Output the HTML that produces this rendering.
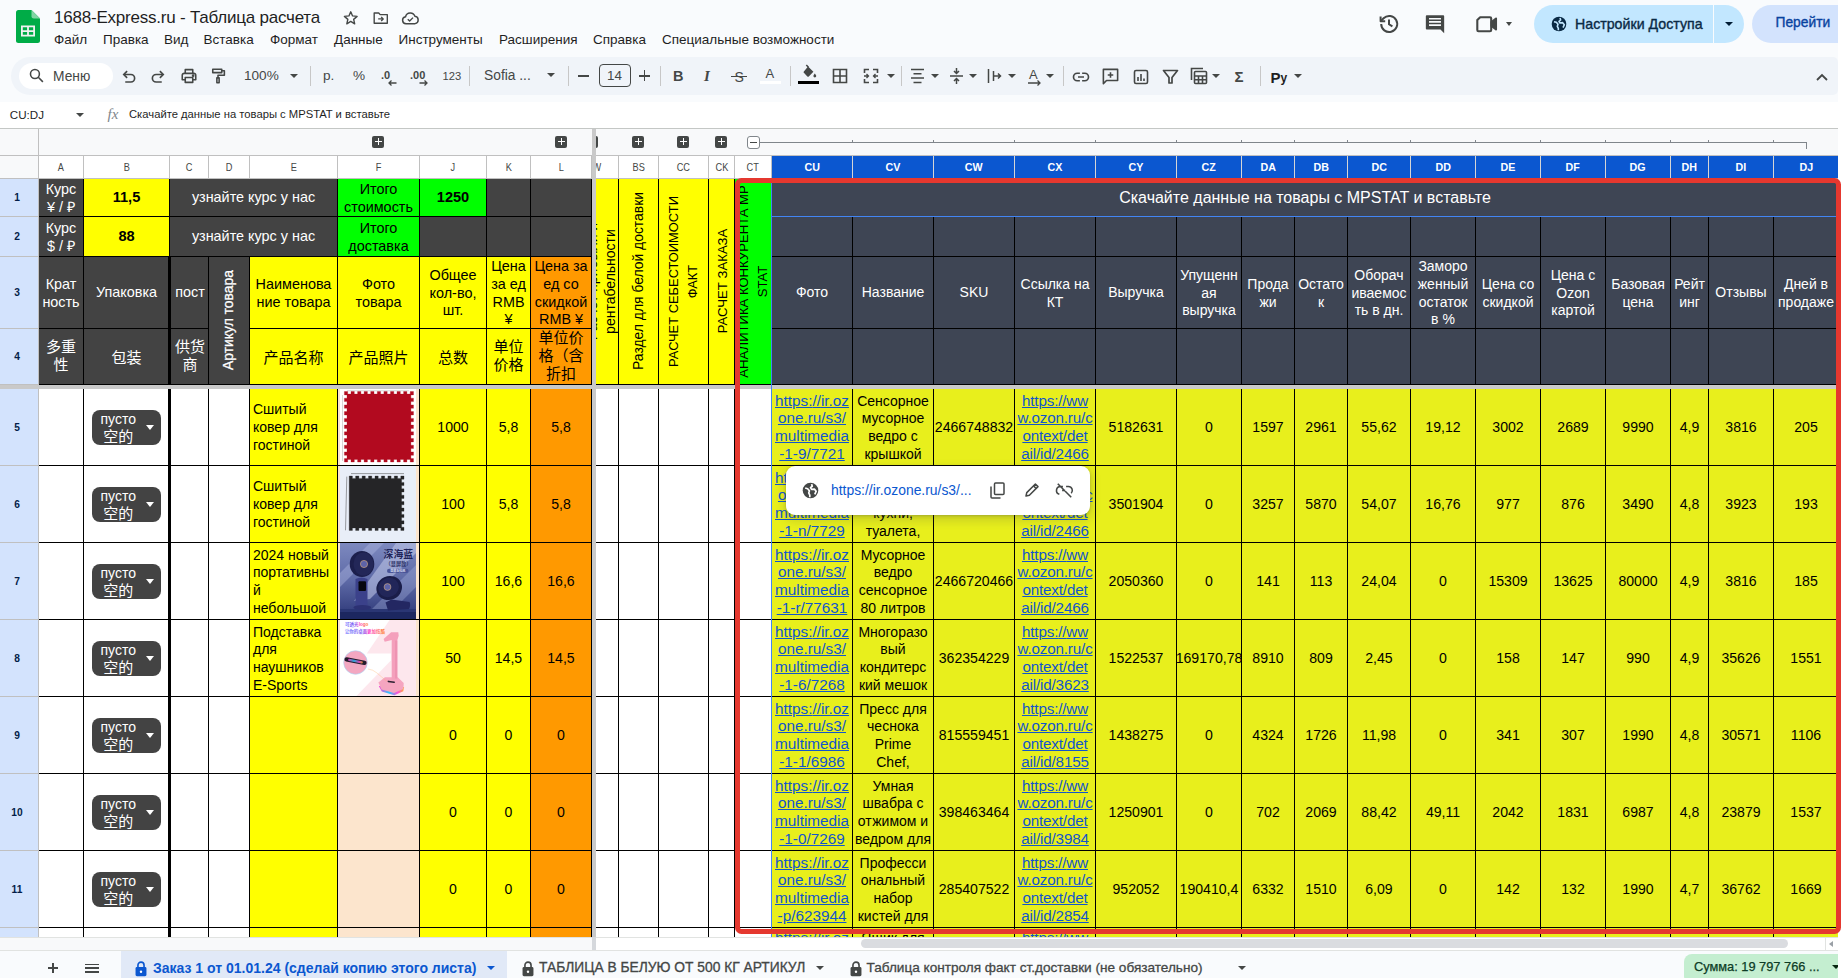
<!DOCTYPE html>
<html lang="ru"><head><meta charset="utf-8"><title>1688-Express.ru - Таблица расчета</title>
<style>
html,body{margin:0;padding:0;background:#fff}
body{width:1842px;height:978px;overflow:hidden;position:relative;font-family:"Liberation Sans","Noto Sans CJK SC",sans-serif;color:#1f1f1f}
#app{position:absolute;left:0;top:0;width:1838px;height:978px;overflow:hidden;background:#f9fbfd}
.a{position:absolute}
.t{position:absolute;white-space:nowrap}
.c{position:absolute;box-sizing:border-box;border-right:1px solid #000;border-bottom:1px solid #000;display:flex;align-items:center;justify-content:center;text-align:center;font-size:14px;line-height:17.7px;color:#000;overflow:hidden;white-space:nowrap;padding-top:2px}
.w{color:#fff}
.b{font-weight:bold}
.l{justify-content:flex-start;text-align:left}
.lnk{color:#1155cc;text-decoration:underline;font-size:15.3px;position:relative;top:-1px}
.lnk2{color:#1155cc;text-decoration:underline;font-size:15.2px;letter-spacing:-.15px;position:relative;top:-1px}
.cj{font-size:15px;position:relative;top:-1.5px}
.ch{position:absolute;box-sizing:border-box;top:156px;height:22px;border-right:1px solid #c0c0c0;background:#fff;color:#444746;font-size:11.5px;line-height:22px;text-align:center}
.ch b{display:inline-block;font-weight:inherit;transform:scaleX(.8);position:relative;top:-.5px}
.chs b{transform:scaleX(.93)}
.chs{background:#0b57d0;color:#fff;font-weight:bold;border-right:1px solid #d5d5d5}
.rh{position:absolute;box-sizing:border-box;left:0;width:38px;padding-right:4px;background:#d3e3fd;color:#041e49;font-size:10.2px;font-weight:bold;text-align:center;border-bottom:1px solid #c0c0c0;display:flex;align-items:center;justify-content:center}
.rot{position:absolute;white-space:nowrap;transform:translateY(-1.5px) rotate(-90deg);transform-origin:center center;text-align:center;font-size:14px;line-height:19px}
.chip{position:absolute;left:8.2px;top:20.5px;width:68.4px;height:35.5px;border-radius:8px;background:#434343;color:#fff;font-size:14px;line-height:17px;text-align:center}
.cj1{top:.6px}
.chip .cj{top:0}
.chip i{position:absolute;right:7px;top:15px;width:0;height:0;border-left:4.5px solid transparent;border-right:4.5px solid transparent;border-top:5px solid #fff}
.chip>span{position:absolute;left:0;top:1px;width:52px;text-align:center;white-space:nowrap}
svg{position:absolute;overflow:visible}
.sep{position:absolute;top:66px;width:1px;height:20px;background:#c7c7c7}
.dd{position:absolute;width:0;height:0;border-left:4px solid transparent;border-right:4px solid transparent;border-top:4px solid #444746}
</style></head><body><div id="app">
<svg style="left:16px;top:10px" width="24" height="33" viewBox="0 0 24 33">
<path d="M2.3 0h13.2L24 8.5v22.2c0 1.3-1 2.3-2.3 2.3H2.3C1 33 0 32 0 30.700V2.300C0 1 1 0 2.300 0z" fill="#00ac47"/>
<path d="M15.500 0L24 8.500h-6.200c-1.300 0-2.300-1-2.300-2.300z" fill="#7fd5a3"/>
<path d="M5 15.500h14v11H5zM6.800 17.300v2.900h4.300v-2.900zm6.100 0v2.900h4.300v-2.900zm-6.100 4.600v2.800h4.300v-2.800zm6.100 0v2.800h4.300v-2.800z" fill="#f1f1f1" fill-rule="evenodd"/>
</svg>
<div class="t" style="left:54px;top:6.5px;font-size:17px;line-height:22.1px;color:#1f1f1f;font-weight:normal;letter-spacing:-0.22px;">1688-Express.ru - Таблица расчета</div>
<svg style="left:342.3px;top:9.2px" width="17.5" height="17.5" viewBox="0 0 24 24" fill="none" stroke="#444746" stroke-width="1.9" stroke-linejoin="round"><path d="M12 3.800l2.500 5.700 6.200.600-4.700 4.100 1.400 6.100L12 17.100l-5.400 3.200 1.400-6.100-4.700-4.100 6.200-.6z"/></svg>
<svg style="left:372.2px;top:9.2px" width="17.5" height="17.5" viewBox="0 0 24 24" fill="none" stroke="#444746" stroke-width="1.9" stroke-linejoin="round"><path d="M3 5.500h6.200l2 2.200H21v11.800H3z"/><path d="M8.500 13.600h6.500M12.600 10.800l2.800 2.800-2.800 2.800" stroke-width="1.800"/></svg>
<svg style="left:401.3px;top:9px" width="18.5" height="18.5" viewBox="0 0 24 24" fill="none" stroke="#444746" stroke-width="1.900" stroke-linejoin="round"><path d="M6.500 19a4.500 4.500 0 0 1-.6-8.950A6.300 6.300 0 0 1 18 9.500 4.800 4.800 0 0 1 18.300 19z"/><path d="M8.800 13.300l2.400 2.400 4.400-4.500" stroke-width="1.800"/></svg>
<div class="t" style="left:54px;top:30.8px;font-size:13.5px;line-height:17.6px;color:#1f1f1f;font-weight:normal;">Файл</div>
<div class="t" style="left:103px;top:30.8px;font-size:13.5px;line-height:17.6px;color:#1f1f1f;font-weight:normal;">Правка</div>
<div class="t" style="left:164px;top:30.8px;font-size:13.5px;line-height:17.6px;color:#1f1f1f;font-weight:normal;">Вид</div>
<div class="t" style="left:203.5px;top:30.8px;font-size:13.5px;line-height:17.6px;color:#1f1f1f;font-weight:normal;">Вставка</div>
<div class="t" style="left:270px;top:30.8px;font-size:13.5px;line-height:17.6px;color:#1f1f1f;font-weight:normal;">Формат</div>
<div class="t" style="left:334px;top:30.8px;font-size:13.5px;line-height:17.6px;color:#1f1f1f;font-weight:normal;">Данные</div>
<div class="t" style="left:398.5px;top:30.8px;font-size:13.5px;line-height:17.6px;color:#1f1f1f;font-weight:normal;">Инструменты</div>
<div class="t" style="left:499px;top:30.8px;font-size:13.5px;line-height:17.6px;color:#1f1f1f;font-weight:normal;">Расширения</div>
<div class="t" style="left:593px;top:30.8px;font-size:13.5px;line-height:17.6px;color:#1f1f1f;font-weight:normal;">Справка</div>
<div class="t" style="left:662px;top:30.8px;font-size:13.5px;line-height:17.6px;color:#1f1f1f;font-weight:normal;">Специальные возможности</div>
<svg style="left:1377px;top:12px" width="24" height="24" viewBox="0 0 24 24" fill="none" stroke="#444746" stroke-width="2"><path d="M4.200 12a8 8 0 1 0 2.400-5.700L4 8.900" stroke-linejoin="round"/><path d="M3.600 4.600v4.600h4.600" stroke-linejoin="round"/><path d="M12 7.500V12.300l3.400 2.100"/></svg>
<svg style="left:1424px;top:13px" width="22" height="22" viewBox="0 0 24 24"><path d="M3 2.500h18a1 1 0 0 1 1 1V22l-4-4H3a1 1 0 0 1-1-1V3.500a1 1 0 0 1 1-1z" fill="#444746"/><path d="M5.500 6.200h13M5.500 9.700h13M5.500 13.200h13" stroke="#f9fbfd" stroke-width="1.700"/></svg>
<svg style="left:1475px;top:13px" width="24" height="22" viewBox="0 0 24 22" fill="none" stroke="#444746" stroke-width="2.100" stroke-linejoin="round"><path d="M5.200 4.200H15a1.200 1.200 0 0 1 1.200 1.200V17A1.200 1.200 0 0 1 15 18.200H3.500A1.200 1.200 0 0 1 2.300 17V7.100z"/><path d="M16.500 9l4.500-3.500v11L16.500 13z" fill="#444746"/></svg>
<div class="dd" style="left:1506px;top:22px;border-left-width:3.5px;border-right-width:3.500px;border-top-width:4px"></div>
<div class="a" style="left:1534px;top:5px;width:210px;height:37.500px;border-radius:19px;background:#c2e7ff"></div>
<div class="a" style="left:1713px;top:5px;width:1px;height:37.500px;background:#f9fbfd"></div>
<svg style="left:1551px;top:16px" width="16" height="16" viewBox="0 0 24 24"><circle cx="12" cy="12" r="11" fill="#0a2a45"/><path d="M4.500 8.500l3.500 1 2.500 3-1 3 1.500 3v3M13.500 3l1 3-2.500 2 1.500 2.500 4-.5 2.500 3-2 4.500" fill="none" stroke="#c2e7ff" stroke-width="2.400" stroke-linejoin="round"/></svg>
<div class="t" style="left:1575px;top:14.6px;font-size:14.2px;line-height:18.5px;color:#0a2a45;font-weight:normal;-webkit-text-stroke:.35px #0a2a45">Настройки Доступа</div>
<div class="dd" style="left:1724.500px;top:22px;border-top-color:#001d35"></div>
<div class="a" style="left:1752px;top:5px;width:100px;height:37.500px;border-radius:19px 4px 4px 19px;background:#d3e3fd"></div>
<div class="t" style="left:1775.5px;top:14.1px;font-size:13.8px;line-height:17.9px;color:#0842a0;font-weight:normal;-webkit-text-stroke:.35px #0842a0">Перейти</div>
<div class="a" style="left:11px;top:57.200px;width:1827px;height:37.700px;border-radius:19px 5px 5px 19px;background:#f0f4f9"></div>
<div class="a" style="left:19px;top:63px;width:94px;height:26px;border-radius:13px;background:#fff"></div>
<svg style="left:28px;top:67px" width="17" height="17" viewBox="0 0 24 24" fill="none" stroke="#444746" stroke-width="2.200"><circle cx="9.800" cy="9.800" r="6.300"/><path d="M14.500 14.500l6.500 6.500"/></svg>
<div class="t" style="left:53px;top:67.6px;font-size:13.8px;line-height:17.9px;color:#444746;font-weight:normal;">Меню</div>
<svg style="left:120px;top:67px" width="18" height="18" viewBox="0 0 24 24" fill="none" stroke="#444746" stroke-width="2.200"><path d="M7 20h7.500a5 5 0 0 0 0-10H5.500"/><path d="M9.500 5.500L5 10l4.500 4.500"/></svg>
<svg style="left:149px;top:67px" width="18" height="18" viewBox="0 0 24 24" fill="none" stroke="#444746" stroke-width="2.200"><path d="M17 20H9.500a5 5 0 0 1 0-10h9"/><path d="M14.500 5.500L19 10l-4.500 4.500"/></svg>
<svg style="left:180px;top:67px" width="18" height="18" viewBox="0 0 24 24" fill="none" stroke="#444746" stroke-width="2.100" stroke-linejoin="round"><path d="M7 8V3.500h10V8"/><path d="M7 17H3V11a2.500 2.500 0 0 1 2.500-2.500h13A2.500 2.500 0 0 1 21 11v6h-4"/><path d="M7 14h10v6.500H7z"/><circle cx="17.500" cy="11.500" r=".8" fill="#444746"/></svg>
<svg style="left:209px;top:67px" width="18" height="18" viewBox="0 0 24 24" fill="none" stroke="#444746" stroke-width="2.100" stroke-linejoin="round"><path d="M5 3h12v4.500H5z"/><path d="M17 5h3.500v6H12v3.500"/><path d="M10.500 14.500h3V21h-3z"/></svg>
<div class="t" style="left:244px;top:67.4px;font-size:13.6px;line-height:17.7px;color:#444746;font-weight:normal;">100%</div>
<div class="dd" style="left:290px;top:74px"></div>
<div class="sep" style="left:310px"></div>
<div class="t" style="left:323px;top:67.4px;font-size:13.6px;line-height:17.7px;color:#444746;font-weight:normal;">р.</div>
<div class="t" style="left:353px;top:67.4px;font-size:13.6px;line-height:17.7px;color:#444746;font-weight:normal;">%</div>
<div class="t" style="left:381px;top:68.0px;font-size:11px;line-height:14.3px;color:#444746;font-weight:bold;">.0</div>
<svg style="left:388px;top:80px" width="9" height="6" viewBox="0 0 9 6" fill="none" stroke="#444746" stroke-width="1.300"><path d="M8.500 3H1M3.500 .5L1 3l2.500 2.500"/></svg>
<div class="t" style="left:410px;top:68.0px;font-size:11px;line-height:14.3px;color:#444746;font-weight:bold;">.00</div>
<svg style="left:419px;top:80px" width="9" height="6" viewBox="0 0 9 6" fill="none" stroke="#444746" stroke-width="1.300"><path d="M.5 3H8M5.500 .5L8 3 5.500 5.500"/></svg>
<div class="t" style="left:442.5px;top:69.3px;font-size:11.2px;line-height:14.6px;color:#444746;font-weight:normal;">123</div>
<div class="sep" style="left:469px"></div>
<div class="t" style="left:484px;top:67.0px;font-size:13.8px;line-height:17.9px;color:#444746;font-weight:normal;">Sofia ...</div>
<div class="dd" style="left:547px;top:73px"></div>
<div class="sep" style="left:568px"></div>
<div class="a" style="left:578px;top:75px;width:11px;height:1.600px;background:#444746"></div>
<div class="a" style="left:599px;top:64px;width:32px;height:23px;box-sizing:border-box;border:1px solid #444746;border-radius:4px"></div>
<div class="t" style="left:607px;top:67.2px;font-size:13.4px;line-height:17.4px;color:#444746;font-weight:normal;">14</div>
<div class="a" style="left:639px;top:75px;width:11px;height:1.600px;background:#444746"></div><div class="a" style="left:643.700px;top:70.300px;width:1.600px;height:11px;background:#444746"></div>
<div class="sep" style="left:660px"></div>
<div class="t" style="left:673px;top:67.0px;font-size:14.5px;line-height:18.9px;color:#444746;font-weight:bold;">B</div>
<div class="t" style="left:704px;top:66.6px;font-size:15px;line-height:19.5px;color:#444746;font-weight:bold;font-style:italic;font-family:'Liberation Serif',serif">I</div>
<div class="t" style="left:734.5px;top:67.5px;font-size:14px;line-height:18.2px;color:#444746;font-weight:normal;">S</div>
<div class="a" style="left:731px;top:75.500px;width:16px;height:1.500px;background:#444746"></div>
<div class="t" style="left:765.5px;top:66.0px;font-size:13px;line-height:16.9px;color:#444746;font-weight:normal;">A</div>
<div class="a" style="left:759.500px;top:81px;width:21.500px;height:3px;background:#fff"></div>
<div class="sep" style="left:790px"></div>
<svg style="left:801px;top:64px" width="17" height="17" viewBox="0 0 24 24"><path d="M10 3.500l7.500 7.500-6.500 6.500a1.500 1.500 0 0 1-2 0L4 12.500a1.500 1.500 0 0 1 0-2z" fill="#444746"/><path d="M7.500 1.500L10.500 4.500" stroke="#444746" stroke-width="2.200"/><path d="M19.500 13.500s2 2.300 2 3.600a2 2 0 0 1-4 0c0-1.300 2-3.600 2-3.600z" fill="#444746"/></svg>
<div class="a" style="left:798px;top:81px;width:21px;height:3px;background:#000"></div>
<svg style="left:832px;top:68px" width="16" height="16" viewBox="0 0 16 16" fill="none" stroke="#444746" stroke-width="1.600"><path d="M1.500 1.500h13v13h-13zM8 1.500v13M1.500 8h13"/></svg>
<svg style="left:863px;top:68px" width="16" height="16" viewBox="0 0 16 16" fill="none" stroke="#444746" stroke-width="1.600"><path d="M1.500 5V1.500H6M10 1.500h4.500V5M1.500 11v3.500H6M10 14.500h4.500V11"/><path d="M1 8h4.500M3.500 6L5.500 8l-2 2M15 8h-4.500M12.500 6l-2 2 2 2" stroke-width="1.300"/></svg>
<div class="dd" style="left:887px;top:74px"></div>
<div class="sep" style="left:901px"></div>
<svg style="left:910px;top:68px" width="15" height="16" viewBox="0 0 15 16" stroke="#444746" stroke-width="1.500"><path d="M1 1.500h13M3.500 5.800h8M1 10.100h13M3.500 14.400h8"/></svg>
<div class="dd" style="left:931px;top:74px"></div>
<svg style="left:949px;top:67px" width="15" height="18" viewBox="0 0 15 18" fill="none" stroke="#444746" stroke-width="1.500"><path d="M1 9h13M7.500 1v5M5 4l2.500 2.500L10 4M7.500 17v-5M5 14l2.500-2.500L10 14"/></svg>
<div class="dd" style="left:969px;top:74px"></div>
<svg style="left:987px;top:68px" width="15" height="16" viewBox="0 0 15 16" fill="none" stroke="#444746" stroke-width="1.500"><path d="M1.500 1v14M6.500 3v10M6.500 8h7M11 5.500L13.500 8 11 10.500"/></svg>
<div class="dd" style="left:1008px;top:74px"></div>
<div class="t" style="left:1029px;top:67.0px;font-size:13px;line-height:16.9px;color:#444746;font-weight:normal;">A</div>
<svg style="left:1028px;top:80px" width="13" height="6" viewBox="0 0 13 6" fill="none" stroke="#444746" stroke-width="1.300"><path d="M0 3h12M9.500 .5L12 3 9.500 5.500"/></svg>
<div class="dd" style="left:1046px;top:74px"></div>
<div class="sep" style="left:1063px"></div>
<svg style="left:1072px;top:68px" width="18" height="18" viewBox="0 0 24 24" fill="none" stroke="#444746" stroke-width="2.200"><path d="M10.500 7H7a5 5 0 0 0 0 10h3.500M13.500 7H17a5 5 0 0 1 0 10h-3.500M8 12h8"/></svg>
<svg style="left:1101px;top:67px" width="19" height="19" viewBox="0 0 24 24" fill="none" stroke="#444746" stroke-width="2" stroke-linejoin="round"><path d="M3 3h18v14H7l-4 4z"/><path d="M12 6.500v7M8.500 10h7"/></svg>
<svg style="left:1133px;top:69px" width="16" height="16" viewBox="0 0 16 16" fill="none" stroke="#444746" stroke-width="1.600"><rect x="1.500" y="1.500" width="13" height="13" rx="1.500"/><path d="M5 12V8M8 12V5M11 12v-2.500"/></svg>
<svg style="left:1162px;top:69px" width="17" height="16" viewBox="0 0 17 16" fill="none" stroke="#444746" stroke-width="1.700" stroke-linejoin="round"><path d="M1.500 1.500h14L10 8.500v5.500H7V8.500z"/></svg>
<svg style="left:1190px;top:67px" width="18" height="18" viewBox="0 0 18 18" fill="none" stroke="#444746" stroke-width="1.600"><path d="M1.500 13V1.500H13"/><rect x="4.500" y="4.500" width="12" height="12" rx="1"/><path d="M4.500 9h12M4.500 12.800h12M8.500 9v7.500M12.500 9v7.500"/></svg>
<div class="dd" style="left:1212px;top:74px"></div>
<div class="t" style="left:1234.5px;top:67.1px;font-size:15px;line-height:19.5px;color:#444746;font-weight:bold;">Σ</div>
<div class="sep" style="left:1260px"></div>
<div class="t" style="left:1270.5px;top:67.6px;font-size:15px;line-height:19.5px;color:#1f1f1f;font-weight:bold;">P</div>
<div class="t" style="left:1280.5px;top:71.0px;font-size:12px;line-height:15.6px;color:#1f1f1f;font-weight:bold;">y</div>
<div class="dd" style="left:1294px;top:74px"></div>
<svg style="left:1816px;top:73px" width="12" height="8" viewBox="0 0 12 8" fill="none" stroke="#444746" stroke-width="1.800"><path d="M1 7l5-5 5 5"/></svg>
<div class="a" style="left:0;top:102px;width:1838px;height:26px;background:#fff"></div>
<div class="t" style="left:9.8px;top:107.3px;font-size:11.6px;line-height:15.1px;color:#1f1f1f;font-weight:normal;">CU:DJ</div>
<div class="dd" style="left:76px;top:113px"></div>
<div class="t" style="left:107.5px;top:104.6px;font-size:15px;line-height:19.5px;color:#80868b;font-weight:normal;font-style:italic;font-family:'Liberation Serif',serif">fx</div>
<div class="t" style="left:129px;top:107.4px;font-size:11.24px;line-height:14.6px;color:#1f1f1f;font-weight:normal;">Скачайте данные на товары с MPSTAT и вставьте</div>
<div class="a" style="left:0;top:128px;width:1838px;height:809px;background:#fff"></div>
<div class="a" style="left:0;top:128px;width:1838px;height:28px;background:#f8f9fa;box-sizing:border-box;border-top:1px solid #c4c7c5;border-bottom:1px solid #c0c0c0"></div>
<div class="a" style="left:0;top:129px;width:39px;height:50px;background:#f8f9fa;box-sizing:border-box;border-right:1px solid #c0c0c0;border-bottom:1px solid #c0c0c0"></div>
<div class="a" style="left:39px;top:178px;width:1799px;height:1px;background:#c0c0c0"></div>
<div class="a" style="left:0;top:155px;width:39px;height:1px;background:#c0c0c0"></div>
<div class="a" style="left:372px;top:135.5px;width:12px;height:12px;border-radius:2px;background:#444746"></div><div class="a" style="left:374.5px;top:141px;width:7px;height:1px;background:#fff"></div><div class="a" style="left:377.5px;top:138px;width:1px;height:7px;background:#fff"></div>
<div class="a" style="left:555px;top:135.5px;width:12px;height:12px;border-radius:2px;background:#444746"></div><div class="a" style="left:557.5px;top:141px;width:7px;height:1px;background:#fff"></div><div class="a" style="left:560.5px;top:138px;width:1px;height:7px;background:#fff"></div>
<div class="a" style="left:632px;top:135.5px;width:12px;height:12px;border-radius:2px;background:#444746"></div><div class="a" style="left:634.5px;top:141px;width:7px;height:1px;background:#fff"></div><div class="a" style="left:637.5px;top:138px;width:1px;height:7px;background:#fff"></div>
<div class="a" style="left:677px;top:135.5px;width:12px;height:12px;border-radius:2px;background:#444746"></div><div class="a" style="left:679.5px;top:141px;width:7px;height:1px;background:#fff"></div><div class="a" style="left:682.5px;top:138px;width:1px;height:7px;background:#fff"></div>
<div class="a" style="left:715px;top:135.5px;width:12px;height:12px;border-radius:2px;background:#444746"></div><div class="a" style="left:717.5px;top:141px;width:7px;height:1px;background:#fff"></div><div class="a" style="left:720.5px;top:138px;width:1px;height:7px;background:#fff"></div>
<div class="a" style="left:596px;top:136px;width:2px;height:12px;border-radius:0 2px 2px 0;background:#444746"></div>
<div class="a" style="left:760px;top:141.500px;width:1046px;height:1px;background:#80868b"></div><div class="a" style="left:1806px;top:141.500px;width:1px;height:7px;background:#80868b"></div>
<div class="a" style="left:852px;top:140px;width:1px;height:2px;background:#80868b"></div>
<div class="a" style="left:933px;top:140px;width:1px;height:2px;background:#80868b"></div>
<div class="a" style="left:1014px;top:140px;width:1px;height:2px;background:#80868b"></div>
<div class="a" style="left:1095px;top:140px;width:1px;height:2px;background:#80868b"></div>
<div class="a" style="left:1176px;top:140px;width:1px;height:2px;background:#80868b"></div>
<div class="a" style="left:1241px;top:140px;width:1px;height:2px;background:#80868b"></div>
<div class="a" style="left:1294px;top:140px;width:1px;height:2px;background:#80868b"></div>
<div class="a" style="left:1347px;top:140px;width:1px;height:2px;background:#80868b"></div>
<div class="a" style="left:1410px;top:140px;width:1px;height:2px;background:#80868b"></div>
<div class="a" style="left:1475px;top:140px;width:1px;height:2px;background:#80868b"></div>
<div class="a" style="left:1540px;top:140px;width:1px;height:2px;background:#80868b"></div>
<div class="a" style="left:1605px;top:140px;width:1px;height:2px;background:#80868b"></div>
<div class="a" style="left:1670px;top:140px;width:1px;height:2px;background:#80868b"></div>
<div class="a" style="left:1708px;top:140px;width:1px;height:2px;background:#80868b"></div>
<div class="a" style="left:1773px;top:140px;width:1px;height:2px;background:#80868b"></div>
<div class="a" style="left:747px;top:135.500px;width:13px;height:13px;box-sizing:border-box;border:1.500px solid #80868b;border-radius:3px;background:#fff"></div><div class="a" style="left:750px;top:141.500px;width:7px;height:1px;background:#444746"></div>
<div class="ch " style="left:39px;width:45px"><b>A</b></div>
<div class="ch " style="left:84px;width:86px"><b>B</b></div>
<div class="ch " style="left:170px;width:39px"><b>C</b></div>
<div class="ch " style="left:209px;width:41px"><b>D</b></div>
<div class="ch " style="left:250px;width:88px"><b>E</b></div>
<div class="ch " style="left:338px;width:82px"><b>F</b></div>
<div class="ch " style="left:420px;width:67px"><b>J</b></div>
<div class="ch " style="left:487px;width:44px"><b>K</b></div>
<div class="ch " style="left:531px;width:61px"><b>L</b></div>
<div class="ch" style="left:596px;width:23px;overflow:hidden"><b style="position:absolute;right:15px;top:-.5px">AW</b></div>
<div class="ch " style="left:619px;width:40px"><b>BS</b></div>
<div class="ch " style="left:659px;width:50px"><b>CC</b></div>
<div class="ch " style="left:709px;width:26px"><b>CK</b></div>
<div class="ch " style="left:735px;width:37px"><b>CT</b></div>
<div class="ch chs" style="left:772px;width:81px"><b>CU</b></div>
<div class="ch chs" style="left:853px;width:81px"><b>CV</b></div>
<div class="ch chs" style="left:934px;width:81px"><b>CW</b></div>
<div class="ch chs" style="left:1015px;width:81px"><b>CX</b></div>
<div class="ch chs" style="left:1096px;width:81px"><b>CY</b></div>
<div class="ch chs" style="left:1177px;width:65px"><b>CZ</b></div>
<div class="ch chs" style="left:1242px;width:53px"><b>DA</b></div>
<div class="ch chs" style="left:1295px;width:53px"><b>DB</b></div>
<div class="ch chs" style="left:1348px;width:63px"><b>DC</b></div>
<div class="ch chs" style="left:1411px;width:65px"><b>DD</b></div>
<div class="ch chs" style="left:1476px;width:65px"><b>DE</b></div>
<div class="ch chs" style="left:1541px;width:65px"><b>DF</b></div>
<div class="ch chs" style="left:1606px;width:65px"><b>DG</b></div>
<div class="ch chs" style="left:1671px;width:38px"><b>DH</b></div>
<div class="ch chs" style="left:1709px;width:65px"><b>DI</b></div>
<div class="ch chs" style="left:1774px;width:65px"><b>DJ</b></div>
<div class="rh" style="top:179px;height:38px">1</div>
<div class="rh" style="top:217px;height:40px">2</div>
<div class="rh" style="top:257px;height:72px">3</div>
<div class="rh" style="top:329px;height:56px">4</div>
<div class="rh" style="top:389px;height:77px">5</div>
<div class="rh" style="top:466px;height:77px">6</div>
<div class="rh" style="top:543px;height:77px">7</div>
<div class="rh" style="top:620px;height:77px">8</div>
<div class="rh" style="top:697px;height:77px">9</div>
<div class="rh" style="top:774px;height:77px">10</div>
<div class="rh" style="top:851px;height:77px">11</div>
<div class="rh" style="top:928px;height:77px"></div>
<div class="a" style="left:38px;top:179px;width:1px;height:758px;background:#c0c0c0"></div>
<div class="c w" style="left:39px;top:179px;width:45px;height:38px;background:#434343;font-size:14.400px;">Курс<br>¥ / ₽</div>
<div class="c b" style="left:84px;top:179px;width:86px;height:38px;background:#ffff00;padding-top:.6px;font-size:14.600px">11,5</div>
<div class="c w" style="left:170px;top:179px;width:168px;height:38px;background:#434343;padding-top:.6px;font-size:14.400px;">узнайте курс у нас</div>
<div class="c " style="left:338px;top:179px;width:82px;height:38px;background:#00ff00;font-size:14.400px;">Итого<br>стоимость</div>
<div class="c b" style="left:420px;top:179px;width:67px;height:38px;background:#00ff00;padding-top:.6px;font-size:14.600px">1250</div>
<div class="c " style="left:487px;top:179px;width:44px;height:38px;background:#434343;"></div>
<div class="c " style="left:531px;top:179px;width:61px;height:38px;background:#434343;"></div>
<div class="c w" style="left:39px;top:217px;width:45px;height:40px;background:#434343;font-size:14.400px;">Курс<br>$ / ₽</div>
<div class="c b" style="left:84px;top:217px;width:86px;height:40px;background:#ffff00;padding-top:.6px;font-size:14.600px">88</div>
<div class="c w" style="left:170px;top:217px;width:168px;height:40px;background:#434343;padding-top:.6px;font-size:14.400px;">узнайте курс у нас</div>
<div class="c " style="left:338px;top:217px;width:82px;height:40px;background:#00ff00;font-size:14.400px;">Итого<br>доставка</div>
<div class="c " style="left:420px;top:217px;width:67px;height:40px;background:#434343;"></div>
<div class="c " style="left:487px;top:217px;width:44px;height:40px;background:#434343;"></div>
<div class="c " style="left:531px;top:217px;width:61px;height:40px;background:#434343;"></div>
<div class="c w" style="left:39px;top:257px;width:45px;height:72px;background:#434343;font-size:14.400px;">Крат<br>ность</div>
<div class="c w" style="left:84px;top:257px;width:86px;height:72px;background:#434343;padding-top:.6px;font-size:14.400px;">Упаковка</div>
<div class="c w" style="left:170px;top:257px;width:39px;height:72px;background:#434343;padding-top:.6px;font-size:14.400px;padding-left:2px">пост</div>
<div class="c w" style="left:209px;top:257px;width:41px;height:128px;background:#434343;"><div class="rot" style="font-size:13.900px;-webkit-text-stroke:.25px #fff">Артикул товара</div></div>
<div class="c " style="left:250px;top:257px;width:88px;height:72px;background:#ffff00;font-size:14.400px;">Наименова<br>ние товара</div>
<div class="c " style="left:338px;top:257px;width:82px;height:72px;background:#ffff00;font-size:14.400px;">Фото<br>товара</div>
<div class="c " style="left:420px;top:257px;width:67px;height:72px;background:#ffff00;font-size:14.400px;">Общее<br>кол-во,<br>шт.</div>
<div class="c " style="left:487px;top:257px;width:44px;height:72px;background:#ffff00;font-size:14.400px;">Цена<br>за ед<br>RMB<br>¥</div>
<div class="c " style="left:531px;top:257px;width:61px;height:72px;background:#ff9900;font-size:14.400px;">Цена за<br>ед со<br>скидкой<br>RMB ¥</div>
<div class="c w" style="left:39px;top:329px;width:45px;height:56px;background:#434343;"><span class="cj">多重<br>性</span></div>
<div class="c w" style="left:84px;top:329px;width:86px;height:56px;background:#434343;padding-top:.6px;"><span class="cj cj1">包装</span></div>
<div class="c w" style="left:170px;top:329px;width:39px;height:56px;background:#434343;padding-left:2px"><span class="cj">供货<br>商</span></div>
<div class="c " style="left:250px;top:329px;width:88px;height:56px;background:#ffff00;padding-top:.6px;"><span class="cj cj1">产品名称</span></div>
<div class="c " style="left:338px;top:329px;width:82px;height:56px;background:#ffff00;padding-top:.6px;"><span class="cj cj1">产品照片</span></div>
<div class="c " style="left:420px;top:329px;width:67px;height:56px;background:#ffff00;padding-top:.6px;"><span class="cj cj1">总数</span></div>
<div class="c " style="left:487px;top:329px;width:44px;height:56px;background:#ffff00;"><span class="cj">单位<br>价格</span></div>
<div class="c " style="left:531px;top:329px;width:61px;height:56px;background:#ff9900;"><span class="cj">单位价<br>格（含<br>折扣</span></div>
<div class="c " style="left:596px;top:179px;width:23px;height:206px;background:#ffff00;"><div class="rot" style="line-height:18px;transform:translate(-5.5px,-1.5px) rotate(-90deg)">Расчет прибыли и<br>рентабельности</div></div>
<div class="c " style="left:619px;top:179px;width:40px;height:206px;background:#ffff00;"><div class="rot" style="font-size:13.900px">Раздел для белой доставки</div></div>
<div class="c " style="left:659px;top:179px;width:50px;height:206px;background:#ffff00;"><div class="rot" style="font-size:12.900px">РАСЧЕТ СЕБЕСТОИМОСТИ<br>ФАКТ</div></div>
<div class="c " style="left:709px;top:179px;width:26px;height:206px;background:#ffff00;"><div class="rot" style="font-size:13.200px;transform:translate(1px,-1.5px) rotate(-90deg)">РАСЧЕТ ЗАКАЗА</div></div>
<div class="c " style="left:735px;top:179px;width:37px;height:206px;background:#00ff00;"><div class="rot" style="font-size:13.100px">АНАЛИТИКА КОНКУРЕНТА MP<br>STAT</div></div>
<div class="c w" style="left:772px;top:179px;width:1067px;height:38px;background:#3e4554;padding-top:.6px;font-size:16px;border-bottom-color:#4285f4">Скачайте данные на товары с MPSTAT и вставьте</div>
<div class="c " style="left:772px;top:217px;width:81px;height:40px;background:#3e4554;"></div>
<div class="c w" style="left:772px;top:257px;width:81px;height:72px;background:#3e4554;padding-top:.6px;font-size:14px">Фото</div>
<div class="c " style="left:772px;top:329px;width:81px;height:56px;background:#3e4554;"></div>
<div class="c " style="left:853px;top:217px;width:81px;height:40px;background:#3e4554;"></div>
<div class="c w" style="left:853px;top:257px;width:81px;height:72px;background:#3e4554;padding-top:.6px;font-size:14px">Название</div>
<div class="c " style="left:853px;top:329px;width:81px;height:56px;background:#3e4554;"></div>
<div class="c " style="left:934px;top:217px;width:81px;height:40px;background:#3e4554;"></div>
<div class="c w" style="left:934px;top:257px;width:81px;height:72px;background:#3e4554;padding-top:.6px;font-size:14px">SKU</div>
<div class="c " style="left:934px;top:329px;width:81px;height:56px;background:#3e4554;"></div>
<div class="c " style="left:1015px;top:217px;width:81px;height:40px;background:#3e4554;"></div>
<div class="c w" style="left:1015px;top:257px;width:81px;height:72px;background:#3e4554;font-size:14px">Ссылка на<br>КТ</div>
<div class="c " style="left:1015px;top:329px;width:81px;height:56px;background:#3e4554;"></div>
<div class="c " style="left:1096px;top:217px;width:81px;height:40px;background:#3e4554;"></div>
<div class="c w" style="left:1096px;top:257px;width:81px;height:72px;background:#3e4554;padding-top:.6px;font-size:14px">Выручка</div>
<div class="c " style="left:1096px;top:329px;width:81px;height:56px;background:#3e4554;"></div>
<div class="c " style="left:1177px;top:217px;width:65px;height:40px;background:#3e4554;"></div>
<div class="c w" style="left:1177px;top:257px;width:65px;height:72px;background:#3e4554;font-size:14px">Упущенн<br>ая<br>выручка</div>
<div class="c " style="left:1177px;top:329px;width:65px;height:56px;background:#3e4554;"></div>
<div class="c " style="left:1242px;top:217px;width:53px;height:40px;background:#3e4554;"></div>
<div class="c w" style="left:1242px;top:257px;width:53px;height:72px;background:#3e4554;font-size:14px">Прода<br>жи</div>
<div class="c " style="left:1242px;top:329px;width:53px;height:56px;background:#3e4554;"></div>
<div class="c " style="left:1295px;top:217px;width:53px;height:40px;background:#3e4554;"></div>
<div class="c w" style="left:1295px;top:257px;width:53px;height:72px;background:#3e4554;font-size:14px">Остато<br>к</div>
<div class="c " style="left:1295px;top:329px;width:53px;height:56px;background:#3e4554;"></div>
<div class="c " style="left:1348px;top:217px;width:63px;height:40px;background:#3e4554;"></div>
<div class="c w" style="left:1348px;top:257px;width:63px;height:72px;background:#3e4554;font-size:14px">Оборач<br>иваемос<br>ть в дн.</div>
<div class="c " style="left:1348px;top:329px;width:63px;height:56px;background:#3e4554;"></div>
<div class="c " style="left:1411px;top:217px;width:65px;height:40px;background:#3e4554;"></div>
<div class="c w" style="left:1411px;top:257px;width:65px;height:72px;background:#3e4554;font-size:14px">Заморо<br>женный<br>остаток<br>в %</div>
<div class="c " style="left:1411px;top:329px;width:65px;height:56px;background:#3e4554;"></div>
<div class="c " style="left:1476px;top:217px;width:65px;height:40px;background:#3e4554;"></div>
<div class="c w" style="left:1476px;top:257px;width:65px;height:72px;background:#3e4554;font-size:14px">Цена со<br>скидкой</div>
<div class="c " style="left:1476px;top:329px;width:65px;height:56px;background:#3e4554;"></div>
<div class="c " style="left:1541px;top:217px;width:65px;height:40px;background:#3e4554;"></div>
<div class="c w" style="left:1541px;top:257px;width:65px;height:72px;background:#3e4554;font-size:14px">Цена с<br>Ozon<br>картой</div>
<div class="c " style="left:1541px;top:329px;width:65px;height:56px;background:#3e4554;"></div>
<div class="c " style="left:1606px;top:217px;width:65px;height:40px;background:#3e4554;"></div>
<div class="c w" style="left:1606px;top:257px;width:65px;height:72px;background:#3e4554;font-size:14px">Базовая<br>цена</div>
<div class="c " style="left:1606px;top:329px;width:65px;height:56px;background:#3e4554;"></div>
<div class="c " style="left:1671px;top:217px;width:38px;height:40px;background:#3e4554;"></div>
<div class="c w" style="left:1671px;top:257px;width:38px;height:72px;background:#3e4554;font-size:14px">Рейт<br>инг</div>
<div class="c " style="left:1671px;top:329px;width:38px;height:56px;background:#3e4554;"></div>
<div class="c " style="left:1709px;top:217px;width:65px;height:40px;background:#3e4554;"></div>
<div class="c w" style="left:1709px;top:257px;width:65px;height:72px;background:#3e4554;padding-top:.6px;font-size:14px">Отзывы</div>
<div class="c " style="left:1709px;top:329px;width:65px;height:56px;background:#3e4554;"></div>
<div class="c " style="left:1774px;top:217px;width:65px;height:40px;background:#3e4554;"></div>
<div class="c w" style="left:1774px;top:257px;width:65px;height:72px;background:#3e4554;font-size:14px">Дней в<br>продаже</div>
<div class="c " style="left:1774px;top:329px;width:65px;height:56px;background:#3e4554;"></div>
<div class="c " style="left:39px;top:389px;width:45px;height:77px;background:#fff;"></div>
<div class="c " style="left:84px;top:389px;width:86px;height:77px;background:#fff;overflow:visible"><div class="chip"><span>пусто<br><span class="cj cj1">空的</span></span><i></i></div></div>
<div class="c " style="left:170px;top:389px;width:39px;height:77px;background:#fff;"></div>
<div class="c " style="left:209px;top:389px;width:41px;height:77px;background:#fff;"></div>
<div class="c l" style="left:250px;top:389px;width:88px;height:77px;background:#ffff00;padding-left:3px">Сшитый<br>ковер для<br>гостиной</div>
<div class="c " style="left:338px;top:389px;width:82px;height:77px;background:#fce5cd;"><svg style="left:2px;top:0" width="76" height="76" viewBox="0 0 76 76"><rect width="76" height="76" fill="#fff"/><path d="M2.500 6v66M7 1.800h62" stroke="#999" stroke-width=".4"/><path d="M4.4 2.5 L7.7 2.5 L7.7 5.1 L11.0 5.1 L11.0 2.5 L14.3 2.5 L14.3 5.1 L17.6 5.1 L17.6 2.5 L20.9 2.5 L20.9 5.1 L24.1 5.1 L24.1 2.5 L27.4 2.5 L27.4 5.1 L30.7 5.1 L30.7 2.5 L34.0 2.5 L34.0 5.1 L37.3 5.1 L37.3 2.5 L40.6 2.5 L40.6 5.1 L43.9 5.1 L43.9 2.5 L47.2 2.5 L47.2 5.1 L50.5 5.1 L50.5 2.5 L53.8 2.5 L53.8 5.1 L57.0 5.1 L57.0 2.5 L60.3 2.5 L60.3 5.1 L63.6 5.1 L63.6 2.5 L66.9 2.5 L66.9 5.1 L70.2 5.1 L70.2 2.5 L73.5 2.5 L73.5 2.5 L73.5 5.9 L70.9 5.9 L70.9 9.2 L73.5 9.2 L73.5 12.6 L70.9 12.6 L70.9 15.9 L73.5 15.9 L73.5 19.3 L70.9 19.3 L70.9 22.6 L73.5 22.6 L73.5 26.0 L70.9 26.0 L70.9 29.4 L73.5 29.4 L73.5 32.7 L70.9 32.7 L70.9 36.1 L73.5 36.1 L73.5 39.4 L70.9 39.4 L70.9 42.8 L73.5 42.8 L73.5 46.1 L70.9 46.1 L70.9 49.5 L73.5 49.5 L73.5 52.9 L70.9 52.9 L70.9 56.2 L73.5 56.2 L73.5 59.6 L70.9 59.6 L70.9 62.9 L73.5 62.9 L73.5 66.3 L70.9 66.3 L70.9 69.6 L73.5 69.6 L73.5 73.0 L73.5 73.0 L70.2 73.0 L70.2 70.4 L66.9 70.4 L66.9 73.0 L63.6 73.0 L63.6 70.4 L60.3 70.4 L60.3 73.0 L57.0 73.0 L57.0 70.4 L53.8 70.4 L53.8 73.0 L50.5 73.0 L50.5 70.4 L47.2 70.4 L47.2 73.0 L43.9 73.0 L43.9 70.4 L40.6 70.4 L40.6 73.0 L37.3 73.0 L37.3 70.4 L34.0 70.4 L34.0 73.0 L30.7 73.0 L30.7 70.4 L27.4 70.4 L27.4 73.0 L24.1 73.0 L24.1 70.4 L20.9 70.4 L20.9 73.0 L17.6 73.0 L17.6 70.4 L14.3 70.4 L14.3 73.0 L11.0 73.0 L11.0 70.4 L7.7 70.4 L7.7 73.0 L4.4 73.0 L4.4 73.0 L4.4 69.6 L7.0 69.6 L7.0 66.3 L4.4 66.3 L4.4 62.9 L7.0 62.9 L7.0 59.6 L4.4 59.6 L4.4 56.2 L7.0 56.2 L7.0 52.9 L4.4 52.9 L4.4 49.5 L7.0 49.5 L7.0 46.1 L4.4 46.1 L4.4 42.8 L7.0 42.8 L7.0 39.4 L4.4 39.4 L4.4 36.1 L7.0 36.1 L7.0 32.7 L4.4 32.7 L4.4 29.4 L7.0 29.4 L7.0 26.0 L4.4 26.0 L4.4 22.6 L7.0 22.6 L7.0 19.3 L4.4 19.3 L4.4 15.9 L7.0 15.9 L7.0 12.6 L4.4 12.6 L4.4 9.2 L7.0 9.2 L7.0 5.9 L4.4 5.9 L4.4 2.5Z" fill="#b20a1f" stroke="#b20a1f" stroke-width=".3" stroke-linejoin="round"/></svg></div>
<div class="c " style="left:420px;top:389px;width:67px;height:77px;background:#ffff00;font-size:14.100px;">1000</div>
<div class="c " style="left:487px;top:389px;width:44px;height:77px;background:#ffff00;font-size:14.100px;">5,8</div>
<div class="c " style="left:531px;top:389px;width:61px;height:77px;background:#ff9900;font-size:14.100px;">5,8</div>
<div class="c " style="left:596px;top:389px;width:23px;height:77px;background:#fff;"></div>
<div class="c " style="left:619px;top:389px;width:40px;height:77px;background:#fff;"></div>
<div class="c " style="left:659px;top:389px;width:50px;height:77px;background:#fff;"></div>
<div class="c " style="left:709px;top:389px;width:26px;height:77px;background:#fff;"></div>
<div class="c " style="left:735px;top:389px;width:37px;height:77px;background:#fff;"></div>
<div class="c " style="left:772px;top:389px;width:81px;height:77px;background:#e8ef1c;"><span class="lnk">https:<span>//</span>ir.oz<br>one.ru/s3/<br>multimedia<br>-1-9/7721</span></div>
<div class="c " style="left:853px;top:389px;width:81px;height:77px;background:#e8ef1c;">Сенсорное<br>мусорное<br>ведро с<br>крышкой</div>
<div class="c " style="left:934px;top:389px;width:81px;height:77px;background:#e8ef1c;font-size:14.100px;">2466748832</div>
<div class="c " style="left:1015px;top:389px;width:81px;height:77px;background:#e8ef1c;"><span class="lnk2">https:<span>//</span>ww<br>w.ozon.ru/c<br>ontext/det<br>ail/id/2466</span></div>
<div class="c " style="left:1096px;top:389px;width:81px;height:77px;background:#e8ef1c;font-size:14.100px;">5182631</div>
<div class="c " style="left:1177px;top:389px;width:65px;height:77px;background:#e8ef1c;font-size:14.100px;">0</div>
<div class="c " style="left:1242px;top:389px;width:53px;height:77px;background:#e8ef1c;font-size:14.100px;">1597</div>
<div class="c " style="left:1295px;top:389px;width:53px;height:77px;background:#e8ef1c;font-size:14.100px;">2961</div>
<div class="c " style="left:1348px;top:389px;width:63px;height:77px;background:#e8ef1c;font-size:14.100px;">55,62</div>
<div class="c " style="left:1411px;top:389px;width:65px;height:77px;background:#e8ef1c;font-size:14.100px;">19,12</div>
<div class="c " style="left:1476px;top:389px;width:65px;height:77px;background:#e8ef1c;font-size:14.100px;">3002</div>
<div class="c " style="left:1541px;top:389px;width:65px;height:77px;background:#e8ef1c;font-size:14.100px;">2689</div>
<div class="c " style="left:1606px;top:389px;width:65px;height:77px;background:#e8ef1c;font-size:14.100px;">9990</div>
<div class="c " style="left:1671px;top:389px;width:38px;height:77px;background:#e8ef1c;font-size:14.100px;">4,9</div>
<div class="c " style="left:1709px;top:389px;width:65px;height:77px;background:#e8ef1c;font-size:14.100px;">3816</div>
<div class="c " style="left:1774px;top:389px;width:65px;height:77px;background:#e8ef1c;font-size:14.100px;">205</div>
<div class="c " style="left:39px;top:466px;width:45px;height:77px;background:#fff;"></div>
<div class="c " style="left:84px;top:466px;width:86px;height:77px;background:#fff;overflow:visible"><div class="chip"><span>пусто<br><span class="cj cj1">空的</span></span><i></i></div></div>
<div class="c " style="left:170px;top:466px;width:39px;height:77px;background:#fff;"></div>
<div class="c " style="left:209px;top:466px;width:41px;height:77px;background:#fff;"></div>
<div class="c l" style="left:250px;top:466px;width:88px;height:77px;background:#ffff00;padding-left:3px">Сшитый<br>ковер для<br>гостиной</div>
<div class="c " style="left:338px;top:466px;width:82px;height:77px;background:#fce5cd;"><svg style="left:2px;top:0" width="76" height="76" viewBox="0 0 76 76"><rect width="76" height="76" fill="#e8eef8"/><path d="M11 7.600h53" stroke="#444" stroke-width=".5"/><path d="M6.800 10.600L5.500 64.300" stroke="#444" stroke-width=".5"/><path d="M9.2 10.0 L12.4 10.0 L12.4 12.4 L15.6 12.4 L15.6 10.0 L18.9 10.0 L18.9 12.4 L22.1 12.4 L22.1 10.0 L25.3 10.0 L25.3 12.4 L28.5 12.4 L28.5 10.0 L31.8 10.0 L31.8 12.4 L35.0 12.4 L35.0 10.0 L38.2 10.0 L38.2 12.4 L41.4 12.4 L41.4 10.0 L44.7 10.0 L44.7 12.4 L47.9 12.4 L47.9 10.0 L51.1 10.0 L51.1 12.4 L54.3 12.4 L54.3 10.0 L57.6 10.0 L57.6 12.4 L60.8 12.4 L60.8 10.0 L64.0 10.0 L64.0 10.0 L64.0 13.2 L61.6 13.2 L61.6 16.4 L64.0 16.4 L64.0 19.6 L61.6 19.6 L61.6 22.8 L64.0 22.8 L64.0 26.0 L61.6 26.0 L61.6 29.2 L64.0 29.2 L64.0 32.4 L61.6 32.4 L61.6 35.6 L64.0 35.6 L64.0 38.8 L61.6 38.8 L61.6 42.0 L64.0 42.0 L64.0 45.2 L61.6 45.2 L61.6 48.4 L64.0 48.4 L64.0 51.6 L61.6 51.6 L61.6 54.8 L64.0 54.8 L64.0 58.0 L61.6 58.0 L61.6 61.2 L64.0 61.2 L64.0 64.4 L64.0 64.4 L60.8 64.4 L60.8 62.0 L57.6 62.0 L57.6 64.4 L54.3 64.4 L54.3 62.0 L51.1 62.0 L51.1 64.4 L47.9 64.4 L47.9 62.0 L44.7 62.0 L44.7 64.4 L41.4 64.4 L41.4 62.0 L38.2 62.0 L38.2 64.4 L35.0 64.4 L35.0 62.0 L31.8 62.0 L31.8 64.4 L28.5 64.4 L28.5 62.0 L25.3 62.0 L25.3 64.4 L22.1 64.4 L22.1 62.0 L18.9 62.0 L18.9 64.4 L15.6 64.4 L15.6 62.0 L12.4 62.0 L12.4 64.4 L9.2 64.4 L9.2 64.4 L9.2 61.2 L9.2 61.2 L9.2 58.0 L9.2 58.0 L9.2 54.8 L9.2 54.8 L9.2 51.6 L9.2 51.6 L9.2 48.4 L9.2 48.4 L9.2 45.2 L9.2 45.2 L9.2 42.0 L9.2 42.0 L9.2 38.8 L9.2 38.8 L9.2 35.6 L9.2 35.6 L9.2 32.4 L9.2 32.4 L9.2 29.2 L9.2 29.2 L9.2 26.0 L9.2 26.0 L9.2 22.8 L9.2 22.8 L9.2 19.6 L9.2 19.6 L9.2 16.4 L9.2 16.4 L9.2 13.2 L9.2 13.2 L9.2 10.0Z" fill="#252527" stroke="#252527" stroke-width=".3" stroke-linejoin="round"/></svg></div>
<div class="c " style="left:420px;top:466px;width:67px;height:77px;background:#ffff00;font-size:14.100px;">100</div>
<div class="c " style="left:487px;top:466px;width:44px;height:77px;background:#ffff00;font-size:14.100px;">5,8</div>
<div class="c " style="left:531px;top:466px;width:61px;height:77px;background:#ff9900;font-size:14.100px;">5,8</div>
<div class="c " style="left:596px;top:466px;width:23px;height:77px;background:#fff;"></div>
<div class="c " style="left:619px;top:466px;width:40px;height:77px;background:#fff;"></div>
<div class="c " style="left:659px;top:466px;width:50px;height:77px;background:#fff;"></div>
<div class="c " style="left:709px;top:466px;width:26px;height:77px;background:#fff;"></div>
<div class="c " style="left:735px;top:466px;width:37px;height:77px;background:#fff;"></div>
<div class="c " style="left:772px;top:466px;width:81px;height:77px;background:#e8ef1c;"><span class="lnk">https:<span>//</span>ir.oz<br>one.ru/s3/<br>multimedia<br>-1-n/7729</span></div>
<div class="c " style="left:853px;top:466px;width:81px;height:77px;background:#e8ef1c;">Ведро для<br>мусора для<br>кухни,<br>туалета,</div>
<div class="c " style="left:934px;top:466px;width:81px;height:77px;background:#e8ef1c;font-size:14.100px;">2466753291</div>
<div class="c " style="left:1015px;top:466px;width:81px;height:77px;background:#e8ef1c;"><span class="lnk2">https:<span>//</span>ww<br>w.ozon.ru/c<br>ontext/det<br>ail/id/2466</span></div>
<div class="c " style="left:1096px;top:466px;width:81px;height:77px;background:#e8ef1c;font-size:14.100px;">3501904</div>
<div class="c " style="left:1177px;top:466px;width:65px;height:77px;background:#e8ef1c;font-size:14.100px;">0</div>
<div class="c " style="left:1242px;top:466px;width:53px;height:77px;background:#e8ef1c;font-size:14.100px;">3257</div>
<div class="c " style="left:1295px;top:466px;width:53px;height:77px;background:#e8ef1c;font-size:14.100px;">5870</div>
<div class="c " style="left:1348px;top:466px;width:63px;height:77px;background:#e8ef1c;font-size:14.100px;">54,07</div>
<div class="c " style="left:1411px;top:466px;width:65px;height:77px;background:#e8ef1c;font-size:14.100px;">16,76</div>
<div class="c " style="left:1476px;top:466px;width:65px;height:77px;background:#e8ef1c;font-size:14.100px;">977</div>
<div class="c " style="left:1541px;top:466px;width:65px;height:77px;background:#e8ef1c;font-size:14.100px;">876</div>
<div class="c " style="left:1606px;top:466px;width:65px;height:77px;background:#e8ef1c;font-size:14.100px;">3490</div>
<div class="c " style="left:1671px;top:466px;width:38px;height:77px;background:#e8ef1c;font-size:14.100px;">4,8</div>
<div class="c " style="left:1709px;top:466px;width:65px;height:77px;background:#e8ef1c;font-size:14.100px;">3923</div>
<div class="c " style="left:1774px;top:466px;width:65px;height:77px;background:#e8ef1c;font-size:14.100px;">193</div>
<div class="c " style="left:39px;top:543px;width:45px;height:77px;background:#fff;"></div>
<div class="c " style="left:84px;top:543px;width:86px;height:77px;background:#fff;overflow:visible"><div class="chip"><span>пусто<br><span class="cj cj1">空的</span></span><i></i></div></div>
<div class="c " style="left:170px;top:543px;width:39px;height:77px;background:#fff;"></div>
<div class="c " style="left:209px;top:543px;width:41px;height:77px;background:#fff;"></div>
<div class="c l" style="left:250px;top:543px;width:88px;height:77px;background:#ffff00;padding-left:3px">2024 новый<br>портативны<br>й<br>небольшой</div>
<div class="c " style="left:338px;top:543px;width:82px;height:77px;background:#fce5cd;"><svg style="left:2px;top:0" width="76" height="76" viewBox="0 0 76 76"><defs><linearGradient id="g7" x1="0" y1="0" x2="0" y2="1"><stop offset="0" stop-color="#7d89bf"/><stop offset=".5" stop-color="#5d69a6"/><stop offset=".85" stop-color="#3a4584"/><stop offset="1" stop-color="#2a3470"/></linearGradient></defs>
<rect width="76" height="76" fill="url(#g7)"/>
<path d="M30 0h14L0 44V30z" fill="#aab4de" opacity=".45"/><path d="M56 0h20v10L30 56 14 58z" fill="#c3cbea" opacity=".55"/><path d="M76 22v22L50 70H28z" fill="#aab4de" opacity=".35"/>
<rect y="67" width="76" height="9" fill="#1c2760"/><path d="M0 66h76v3H0z" fill="#2a3674"/>
<ellipse cx="22" cy="21" rx="12.300" ry="13" fill="#1c1f4c"/><ellipse cx="23.500" cy="21" rx="10" ry="11.500" fill="#232758"/><circle cx="24" cy="21" r="3.600" fill="#5d63a8" stroke="#c7a07c" stroke-width=".7"/>
<path d="M15.500 36q6-3 12 0v28h-12z" fill="#3b418a"/><rect x="18.500" y="38.200" width="7.500" height="9.800" rx="1" fill="#07080f"/>
<ellipse cx="22.300" cy="64.500" rx="8.900" ry="2.600" fill="#2c3173"/>
<ellipse cx="49.200" cy="45" rx="13" ry="11.800" transform="rotate(-25 49.200 45)" fill="#1a1d49"/><ellipse cx="48.500" cy="44.500" rx="10.500" ry="9.500" transform="rotate(-25 48.500 44.500)" fill="#222659"/><circle cx="47.500" cy="44" r="3.400" fill="#5d63a8" stroke="#c7a07c" stroke-width=".7"/>
<path d="M45.500 59.500l6-3 18 2.500q1.500 3-.5 7l-21 1.500z" fill="#232762"/>
<text x="73" y="15" text-anchor="end" font-size="9.800" font-weight="bold" fill="#1e2459" font-family="'Liberation Sans','Noto Sans CJK SC',sans-serif">深海蓝</text>
<text x="71.500" y="23" text-anchor="end" font-size="5.200" font-weight="bold" fill="#2a3066" font-family="'Liberation Sans','Noto Sans CJK SC',sans-serif">（显屏款）</text>
<rect x="47" y="25.800" width="21.500" height="4.200" rx="2.100" fill="#4a5598"/><text x="57.700" y="29.200" text-anchor="middle" font-size="3" font-weight="bold" fill="#e8ecff" font-family="'Liberation Sans','Noto Sans CJK SC',sans-serif">显屏五挡风</text></svg></div>
<div class="c " style="left:420px;top:543px;width:67px;height:77px;background:#ffff00;font-size:14.100px;">100</div>
<div class="c " style="left:487px;top:543px;width:44px;height:77px;background:#ffff00;font-size:14.100px;">16,6</div>
<div class="c " style="left:531px;top:543px;width:61px;height:77px;background:#ff9900;font-size:14.100px;">16,6</div>
<div class="c " style="left:596px;top:543px;width:23px;height:77px;background:#fff;"></div>
<div class="c " style="left:619px;top:543px;width:40px;height:77px;background:#fff;"></div>
<div class="c " style="left:659px;top:543px;width:50px;height:77px;background:#fff;"></div>
<div class="c " style="left:709px;top:543px;width:26px;height:77px;background:#fff;"></div>
<div class="c " style="left:735px;top:543px;width:37px;height:77px;background:#fff;"></div>
<div class="c " style="left:772px;top:543px;width:81px;height:77px;background:#e8ef1c;"><span class="lnk">https:<span>//</span>ir.oz<br>one.ru/s3/<br>multimedia<br>-1-r/77631</span></div>
<div class="c " style="left:853px;top:543px;width:81px;height:77px;background:#e8ef1c;">Мусорное<br>ведро<br>сенсорное<br>80 литров</div>
<div class="c " style="left:934px;top:543px;width:81px;height:77px;background:#e8ef1c;font-size:14.100px;">2466720466</div>
<div class="c " style="left:1015px;top:543px;width:81px;height:77px;background:#e8ef1c;"><span class="lnk2">https:<span>//</span>ww<br>w.ozon.ru/c<br>ontext/det<br>ail/id/2466</span></div>
<div class="c " style="left:1096px;top:543px;width:81px;height:77px;background:#e8ef1c;font-size:14.100px;">2050360</div>
<div class="c " style="left:1177px;top:543px;width:65px;height:77px;background:#e8ef1c;font-size:14.100px;">0</div>
<div class="c " style="left:1242px;top:543px;width:53px;height:77px;background:#e8ef1c;font-size:14.100px;">141</div>
<div class="c " style="left:1295px;top:543px;width:53px;height:77px;background:#e8ef1c;font-size:14.100px;">113</div>
<div class="c " style="left:1348px;top:543px;width:63px;height:77px;background:#e8ef1c;font-size:14.100px;">24,04</div>
<div class="c " style="left:1411px;top:543px;width:65px;height:77px;background:#e8ef1c;font-size:14.100px;">0</div>
<div class="c " style="left:1476px;top:543px;width:65px;height:77px;background:#e8ef1c;font-size:14.100px;">15309</div>
<div class="c " style="left:1541px;top:543px;width:65px;height:77px;background:#e8ef1c;font-size:14.100px;">13625</div>
<div class="c " style="left:1606px;top:543px;width:65px;height:77px;background:#e8ef1c;font-size:14.100px;">80000</div>
<div class="c " style="left:1671px;top:543px;width:38px;height:77px;background:#e8ef1c;font-size:14.100px;">4,9</div>
<div class="c " style="left:1709px;top:543px;width:65px;height:77px;background:#e8ef1c;font-size:14.100px;">3816</div>
<div class="c " style="left:1774px;top:543px;width:65px;height:77px;background:#e8ef1c;font-size:14.100px;">185</div>
<div class="c " style="left:39px;top:620px;width:45px;height:77px;background:#fff;"></div>
<div class="c " style="left:84px;top:620px;width:86px;height:77px;background:#fff;overflow:visible"><div class="chip"><span>пусто<br><span class="cj cj1">空的</span></span><i></i></div></div>
<div class="c " style="left:170px;top:620px;width:39px;height:77px;background:#fff;"></div>
<div class="c " style="left:209px;top:620px;width:41px;height:77px;background:#fff;"></div>
<div class="c l" style="left:250px;top:620px;width:88px;height:77px;background:#ffff00;padding-left:3px">Подставка<br>для<br>наушников<br>E-Sports</div>
<div class="c " style="left:338px;top:620px;width:82px;height:77px;background:#fce5cd;"><svg style="left:2px;top:0" width="76" height="76" viewBox="0 0 76 76"><defs><linearGradient id="g8" x1="0" y1="0" x2="1" y2="0"><stop offset="0" stop-color="#7a7cff"/><stop offset=".45" stop-color="#7f5cf0"/><stop offset=".6" stop-color="#ff3fc8"/><stop offset="1" stop-color="#ff8a2a"/></linearGradient><linearGradient id="g8b" x1="0" y1="0" x2="1" y2="0"><stop offset="0" stop-color="#ff3fd0"/><stop offset=".4" stop-color="#29c8ff"/><stop offset=".75" stop-color="#ff4fd8"/><stop offset="1" stop-color="#ffb030"/></linearGradient></defs>
<rect width="76" height="76" fill="#fff"/>
<path d="M49.600 0H76v76H16.500L50.900 40.400V33.500H26.800z" fill="#fde7ed"/>
<path d="M38.800 66l3 5.500 12.500 3.800 9-4 .8-4.300z" fill="url(#g8b)"/>
<path d="M38.400 62.500l6.500-5.200h12.800l6 5.800-.3 6-9.400 4-12.500-3.600z" fill="#f5a5c0"/>
<path d="M43.600 18.900l7.500-6.600h7.200l.4 3.500-1.400 4.500V59.500h-5.600V20l-7 1.800z" fill="#f4a0bc"/><path d="M55 20.500h2.300v38H55z" fill="#ee93b2"/>
<rect x="47.500" y="61" width="7.500" height="1.600" rx=".8" fill="#2b2030" transform="rotate(8 51 62)"/>
<path d="M28 49q5 .5 9 4t10 8.500" stroke="#ffb36b" stroke-width=".35" fill="none"/>
<circle cx="15.500" cy="42.500" r="11.800" fill="#f3a7c1" stroke="#a6d4f5" stroke-width=".6"/>
<rect x="4.300" y="39" width="22.500" height="4.200" rx="2.100" fill="#241a2c" transform="rotate(11 15.500 41)"/><rect x="8" y="40" width="15" height="2.200" rx="1.100" fill="url(#g8b)" opacity=".8" transform="rotate(11 15.500 41)"/>
<text x="4.900" y="6.200" font-size="4.600" font-weight="bold" fill="url(#g8)" font-family="'Liberation Sans','Noto Sans CJK SC',sans-serif">可透光logo</text>
<text x="4.900" y="12.800" font-size="4.450" font-weight="bold" fill="url(#g8)" font-family="'Liberation Sans','Noto Sans CJK SC',sans-serif">让你的桌面更加炫酷</text></svg></div>
<div class="c " style="left:420px;top:620px;width:67px;height:77px;background:#ffff00;font-size:14.100px;">50</div>
<div class="c " style="left:487px;top:620px;width:44px;height:77px;background:#ffff00;font-size:14.100px;">14,5</div>
<div class="c " style="left:531px;top:620px;width:61px;height:77px;background:#ff9900;font-size:14.100px;">14,5</div>
<div class="c " style="left:596px;top:620px;width:23px;height:77px;background:#fff;"></div>
<div class="c " style="left:619px;top:620px;width:40px;height:77px;background:#fff;"></div>
<div class="c " style="left:659px;top:620px;width:50px;height:77px;background:#fff;"></div>
<div class="c " style="left:709px;top:620px;width:26px;height:77px;background:#fff;"></div>
<div class="c " style="left:735px;top:620px;width:37px;height:77px;background:#fff;"></div>
<div class="c " style="left:772px;top:620px;width:81px;height:77px;background:#e8ef1c;"><span class="lnk">https:<span>//</span>ir.oz<br>one.ru/s3/<br>multimedia<br>-1-6/7268</span></div>
<div class="c " style="left:853px;top:620px;width:81px;height:77px;background:#e8ef1c;">Многоразо<br>вый<br>кондитерс<br>кий мешок</div>
<div class="c " style="left:934px;top:620px;width:81px;height:77px;background:#e8ef1c;font-size:14.100px;">362354229</div>
<div class="c " style="left:1015px;top:620px;width:81px;height:77px;background:#e8ef1c;"><span class="lnk2">https:<span>//</span>ww<br>w.ozon.ru/c<br>ontext/det<br>ail/id/3623</span></div>
<div class="c " style="left:1096px;top:620px;width:81px;height:77px;background:#e8ef1c;font-size:14.100px;">1522537</div>
<div class="c " style="left:1177px;top:620px;width:65px;height:77px;background:#e8ef1c;font-size:14.100px;">169170,78</div>
<div class="c " style="left:1242px;top:620px;width:53px;height:77px;background:#e8ef1c;font-size:14.100px;">8910</div>
<div class="c " style="left:1295px;top:620px;width:53px;height:77px;background:#e8ef1c;font-size:14.100px;">809</div>
<div class="c " style="left:1348px;top:620px;width:63px;height:77px;background:#e8ef1c;font-size:14.100px;">2,45</div>
<div class="c " style="left:1411px;top:620px;width:65px;height:77px;background:#e8ef1c;font-size:14.100px;">0</div>
<div class="c " style="left:1476px;top:620px;width:65px;height:77px;background:#e8ef1c;font-size:14.100px;">158</div>
<div class="c " style="left:1541px;top:620px;width:65px;height:77px;background:#e8ef1c;font-size:14.100px;">147</div>
<div class="c " style="left:1606px;top:620px;width:65px;height:77px;background:#e8ef1c;font-size:14.100px;">990</div>
<div class="c " style="left:1671px;top:620px;width:38px;height:77px;background:#e8ef1c;font-size:14.100px;">4,9</div>
<div class="c " style="left:1709px;top:620px;width:65px;height:77px;background:#e8ef1c;font-size:14.100px;">35626</div>
<div class="c " style="left:1774px;top:620px;width:65px;height:77px;background:#e8ef1c;font-size:14.100px;">1551</div>
<div class="c " style="left:39px;top:697px;width:45px;height:77px;background:#fff;"></div>
<div class="c " style="left:84px;top:697px;width:86px;height:77px;background:#fff;overflow:visible"><div class="chip"><span>пусто<br><span class="cj cj1">空的</span></span><i></i></div></div>
<div class="c " style="left:170px;top:697px;width:39px;height:77px;background:#fff;"></div>
<div class="c " style="left:209px;top:697px;width:41px;height:77px;background:#fff;"></div>
<div class="c l" style="left:250px;top:697px;width:88px;height:77px;background:#ffff00;padding-left:3px"></div>
<div class="c " style="left:338px;top:697px;width:82px;height:77px;background:#fce5cd;"></div>
<div class="c " style="left:420px;top:697px;width:67px;height:77px;background:#ffff00;font-size:14.100px;">0</div>
<div class="c " style="left:487px;top:697px;width:44px;height:77px;background:#ffff00;font-size:14.100px;">0</div>
<div class="c " style="left:531px;top:697px;width:61px;height:77px;background:#ff9900;font-size:14.100px;">0</div>
<div class="c " style="left:596px;top:697px;width:23px;height:77px;background:#fff;"></div>
<div class="c " style="left:619px;top:697px;width:40px;height:77px;background:#fff;"></div>
<div class="c " style="left:659px;top:697px;width:50px;height:77px;background:#fff;"></div>
<div class="c " style="left:709px;top:697px;width:26px;height:77px;background:#fff;"></div>
<div class="c " style="left:735px;top:697px;width:37px;height:77px;background:#fff;"></div>
<div class="c " style="left:772px;top:697px;width:81px;height:77px;background:#e8ef1c;"><span class="lnk">https:<span>//</span>ir.oz<br>one.ru/s3/<br>multimedia<br>-1-1/6986</span></div>
<div class="c " style="left:853px;top:697px;width:81px;height:77px;background:#e8ef1c;">Пресс для<br>чеснока<br>Prime<br>Chef,</div>
<div class="c " style="left:934px;top:697px;width:81px;height:77px;background:#e8ef1c;font-size:14.100px;">815559451</div>
<div class="c " style="left:1015px;top:697px;width:81px;height:77px;background:#e8ef1c;"><span class="lnk2">https:<span>//</span>ww<br>w.ozon.ru/c<br>ontext/det<br>ail/id/8155</span></div>
<div class="c " style="left:1096px;top:697px;width:81px;height:77px;background:#e8ef1c;font-size:14.100px;">1438275</div>
<div class="c " style="left:1177px;top:697px;width:65px;height:77px;background:#e8ef1c;font-size:14.100px;">0</div>
<div class="c " style="left:1242px;top:697px;width:53px;height:77px;background:#e8ef1c;font-size:14.100px;">4324</div>
<div class="c " style="left:1295px;top:697px;width:53px;height:77px;background:#e8ef1c;font-size:14.100px;">1726</div>
<div class="c " style="left:1348px;top:697px;width:63px;height:77px;background:#e8ef1c;font-size:14.100px;">11,98</div>
<div class="c " style="left:1411px;top:697px;width:65px;height:77px;background:#e8ef1c;font-size:14.100px;">0</div>
<div class="c " style="left:1476px;top:697px;width:65px;height:77px;background:#e8ef1c;font-size:14.100px;">341</div>
<div class="c " style="left:1541px;top:697px;width:65px;height:77px;background:#e8ef1c;font-size:14.100px;">307</div>
<div class="c " style="left:1606px;top:697px;width:65px;height:77px;background:#e8ef1c;font-size:14.100px;">1990</div>
<div class="c " style="left:1671px;top:697px;width:38px;height:77px;background:#e8ef1c;font-size:14.100px;">4,8</div>
<div class="c " style="left:1709px;top:697px;width:65px;height:77px;background:#e8ef1c;font-size:14.100px;">30571</div>
<div class="c " style="left:1774px;top:697px;width:65px;height:77px;background:#e8ef1c;font-size:14.100px;">1106</div>
<div class="c " style="left:39px;top:774px;width:45px;height:77px;background:#fff;"></div>
<div class="c " style="left:84px;top:774px;width:86px;height:77px;background:#fff;overflow:visible"><div class="chip"><span>пусто<br><span class="cj cj1">空的</span></span><i></i></div></div>
<div class="c " style="left:170px;top:774px;width:39px;height:77px;background:#fff;"></div>
<div class="c " style="left:209px;top:774px;width:41px;height:77px;background:#fff;"></div>
<div class="c l" style="left:250px;top:774px;width:88px;height:77px;background:#ffff00;padding-left:3px"></div>
<div class="c " style="left:338px;top:774px;width:82px;height:77px;background:#fce5cd;"></div>
<div class="c " style="left:420px;top:774px;width:67px;height:77px;background:#ffff00;font-size:14.100px;">0</div>
<div class="c " style="left:487px;top:774px;width:44px;height:77px;background:#ffff00;font-size:14.100px;">0</div>
<div class="c " style="left:531px;top:774px;width:61px;height:77px;background:#ff9900;font-size:14.100px;">0</div>
<div class="c " style="left:596px;top:774px;width:23px;height:77px;background:#fff;"></div>
<div class="c " style="left:619px;top:774px;width:40px;height:77px;background:#fff;"></div>
<div class="c " style="left:659px;top:774px;width:50px;height:77px;background:#fff;"></div>
<div class="c " style="left:709px;top:774px;width:26px;height:77px;background:#fff;"></div>
<div class="c " style="left:735px;top:774px;width:37px;height:77px;background:#fff;"></div>
<div class="c " style="left:772px;top:774px;width:81px;height:77px;background:#e8ef1c;"><span class="lnk">https:<span>//</span>ir.oz<br>one.ru/s3/<br>multimedia<br>-1-0/7269</span></div>
<div class="c " style="left:853px;top:774px;width:81px;height:77px;background:#e8ef1c;">Умная<br>швабра с<br>отжимом и<br>ведром для</div>
<div class="c " style="left:934px;top:774px;width:81px;height:77px;background:#e8ef1c;font-size:14.100px;">398463464</div>
<div class="c " style="left:1015px;top:774px;width:81px;height:77px;background:#e8ef1c;"><span class="lnk2">https:<span>//</span>ww<br>w.ozon.ru/c<br>ontext/det<br>ail/id/3984</span></div>
<div class="c " style="left:1096px;top:774px;width:81px;height:77px;background:#e8ef1c;font-size:14.100px;">1250901</div>
<div class="c " style="left:1177px;top:774px;width:65px;height:77px;background:#e8ef1c;font-size:14.100px;">0</div>
<div class="c " style="left:1242px;top:774px;width:53px;height:77px;background:#e8ef1c;font-size:14.100px;">702</div>
<div class="c " style="left:1295px;top:774px;width:53px;height:77px;background:#e8ef1c;font-size:14.100px;">2069</div>
<div class="c " style="left:1348px;top:774px;width:63px;height:77px;background:#e8ef1c;font-size:14.100px;">88,42</div>
<div class="c " style="left:1411px;top:774px;width:65px;height:77px;background:#e8ef1c;font-size:14.100px;">49,11</div>
<div class="c " style="left:1476px;top:774px;width:65px;height:77px;background:#e8ef1c;font-size:14.100px;">2042</div>
<div class="c " style="left:1541px;top:774px;width:65px;height:77px;background:#e8ef1c;font-size:14.100px;">1831</div>
<div class="c " style="left:1606px;top:774px;width:65px;height:77px;background:#e8ef1c;font-size:14.100px;">6987</div>
<div class="c " style="left:1671px;top:774px;width:38px;height:77px;background:#e8ef1c;font-size:14.100px;">4,8</div>
<div class="c " style="left:1709px;top:774px;width:65px;height:77px;background:#e8ef1c;font-size:14.100px;">23879</div>
<div class="c " style="left:1774px;top:774px;width:65px;height:77px;background:#e8ef1c;font-size:14.100px;">1537</div>
<div class="c " style="left:39px;top:851px;width:45px;height:77px;background:#fff;"></div>
<div class="c " style="left:84px;top:851px;width:86px;height:77px;background:#fff;overflow:visible"><div class="chip"><span>пусто<br><span class="cj cj1">空的</span></span><i></i></div></div>
<div class="c " style="left:170px;top:851px;width:39px;height:77px;background:#fff;"></div>
<div class="c " style="left:209px;top:851px;width:41px;height:77px;background:#fff;"></div>
<div class="c l" style="left:250px;top:851px;width:88px;height:77px;background:#ffff00;padding-left:3px"></div>
<div class="c " style="left:338px;top:851px;width:82px;height:77px;background:#fce5cd;"></div>
<div class="c " style="left:420px;top:851px;width:67px;height:77px;background:#ffff00;font-size:14.100px;">0</div>
<div class="c " style="left:487px;top:851px;width:44px;height:77px;background:#ffff00;font-size:14.100px;">0</div>
<div class="c " style="left:531px;top:851px;width:61px;height:77px;background:#ff9900;font-size:14.100px;">0</div>
<div class="c " style="left:596px;top:851px;width:23px;height:77px;background:#fff;"></div>
<div class="c " style="left:619px;top:851px;width:40px;height:77px;background:#fff;"></div>
<div class="c " style="left:659px;top:851px;width:50px;height:77px;background:#fff;"></div>
<div class="c " style="left:709px;top:851px;width:26px;height:77px;background:#fff;"></div>
<div class="c " style="left:735px;top:851px;width:37px;height:77px;background:#fff;"></div>
<div class="c " style="left:772px;top:851px;width:81px;height:77px;background:#e8ef1c;"><span class="lnk">https:<span>//</span>ir.oz<br>one.ru/s3/<br>multimedia<br>-p/623944</span></div>
<div class="c " style="left:853px;top:851px;width:81px;height:77px;background:#e8ef1c;">Професси<br>ональный<br>набор<br>кистей для</div>
<div class="c " style="left:934px;top:851px;width:81px;height:77px;background:#e8ef1c;font-size:14.100px;">285407522</div>
<div class="c " style="left:1015px;top:851px;width:81px;height:77px;background:#e8ef1c;"><span class="lnk2">https:<span>//</span>ww<br>w.ozon.ru/c<br>ontext/det<br>ail/id/2854</span></div>
<div class="c " style="left:1096px;top:851px;width:81px;height:77px;background:#e8ef1c;font-size:14.100px;">952052</div>
<div class="c " style="left:1177px;top:851px;width:65px;height:77px;background:#e8ef1c;font-size:14.100px;">190410,4</div>
<div class="c " style="left:1242px;top:851px;width:53px;height:77px;background:#e8ef1c;font-size:14.100px;">6332</div>
<div class="c " style="left:1295px;top:851px;width:53px;height:77px;background:#e8ef1c;font-size:14.100px;">1510</div>
<div class="c " style="left:1348px;top:851px;width:63px;height:77px;background:#e8ef1c;font-size:14.100px;">6,09</div>
<div class="c " style="left:1411px;top:851px;width:65px;height:77px;background:#e8ef1c;font-size:14.100px;">0</div>
<div class="c " style="left:1476px;top:851px;width:65px;height:77px;background:#e8ef1c;font-size:14.100px;">142</div>
<div class="c " style="left:1541px;top:851px;width:65px;height:77px;background:#e8ef1c;font-size:14.100px;">132</div>
<div class="c " style="left:1606px;top:851px;width:65px;height:77px;background:#e8ef1c;font-size:14.100px;">1990</div>
<div class="c " style="left:1671px;top:851px;width:38px;height:77px;background:#e8ef1c;font-size:14.100px;">4,7</div>
<div class="c " style="left:1709px;top:851px;width:65px;height:77px;background:#e8ef1c;font-size:14.100px;">36762</div>
<div class="c " style="left:1774px;top:851px;width:65px;height:77px;background:#e8ef1c;font-size:14.100px;">1669</div>
<div class="c " style="left:39px;top:928px;width:45px;height:77px;background:#fff;"></div>
<div class="c " style="left:84px;top:928px;width:86px;height:77px;background:#fff;overflow:visible"></div>
<div class="c " style="left:170px;top:928px;width:39px;height:77px;background:#fff;"></div>
<div class="c " style="left:209px;top:928px;width:41px;height:77px;background:#fff;"></div>
<div class="c l" style="left:250px;top:928px;width:88px;height:77px;background:#ffff00;padding-left:3px"></div>
<div class="c " style="left:338px;top:928px;width:82px;height:77px;background:#fce5cd;"></div>
<div class="c " style="left:420px;top:928px;width:67px;height:77px;background:#ffff00;font-size:14.100px;"></div>
<div class="c " style="left:487px;top:928px;width:44px;height:77px;background:#ffff00;font-size:14.100px;"></div>
<div class="c " style="left:531px;top:928px;width:61px;height:77px;background:#ff9900;font-size:14.100px;"></div>
<div class="c " style="left:596px;top:928px;width:23px;height:77px;background:#fff;"></div>
<div class="c " style="left:619px;top:928px;width:40px;height:77px;background:#fff;"></div>
<div class="c " style="left:659px;top:928px;width:50px;height:77px;background:#fff;"></div>
<div class="c " style="left:709px;top:928px;width:26px;height:77px;background:#fff;"></div>
<div class="c " style="left:735px;top:928px;width:37px;height:77px;background:#fff;"></div>
<div class="c " style="left:772px;top:928px;width:81px;height:77px;background:#e8ef1c;align-items:flex-start;"><span class="lnk">https:<span>//</span>ir.oz<br>one.ru/s3/<br>multimedia<br>-1-2/7001</span></div>
<div class="c " style="left:853px;top:928px;width:81px;height:77px;background:#e8ef1c;align-items:flex-start;">Ящик для<br>хранения<br>вещей<br>с крышкой</div>
<div class="c " style="left:934px;top:928px;width:81px;height:77px;background:#e8ef1c;font-size:14.100px;"></div>
<div class="c " style="left:1015px;top:928px;width:81px;height:77px;background:#e8ef1c;align-items:flex-start;"><span class="lnk2">https:<span>//</span>ww<br>w.ozon.ru/c<br>ontext/det<br>ail/id/1103</span></div>
<div class="c " style="left:1096px;top:928px;width:81px;height:77px;background:#e8ef1c;font-size:14.100px;"></div>
<div class="c " style="left:1177px;top:928px;width:65px;height:77px;background:#e8ef1c;font-size:14.100px;"></div>
<div class="c " style="left:1242px;top:928px;width:53px;height:77px;background:#e8ef1c;font-size:14.100px;"></div>
<div class="c " style="left:1295px;top:928px;width:53px;height:77px;background:#e8ef1c;font-size:14.100px;"></div>
<div class="c " style="left:1348px;top:928px;width:63px;height:77px;background:#e8ef1c;font-size:14.100px;"></div>
<div class="c " style="left:1411px;top:928px;width:65px;height:77px;background:#e8ef1c;font-size:14.100px;"></div>
<div class="c " style="left:1476px;top:928px;width:65px;height:77px;background:#e8ef1c;font-size:14.100px;"></div>
<div class="c " style="left:1541px;top:928px;width:65px;height:77px;background:#e8ef1c;font-size:14.100px;"></div>
<div class="c " style="left:1606px;top:928px;width:65px;height:77px;background:#e8ef1c;font-size:14.100px;"></div>
<div class="c " style="left:1671px;top:928px;width:38px;height:77px;background:#e8ef1c;font-size:14.100px;"></div>
<div class="c " style="left:1709px;top:928px;width:65px;height:77px;background:#e8ef1c;font-size:14.100px;"></div>
<div class="c " style="left:1774px;top:928px;width:65px;height:77px;background:#e8ef1c;font-size:14.100px;"></div>
<div class="a" style="left:168px;top:257px;width:3px;height:680px;background:#000"></div>
<div class="a" style="left:0;top:385px;width:1838px;height:4px;background:#c9c9c9"></div>
<div class="a" style="left:592px;top:129px;width:4px;height:821px;background:#c9c9c9"></div>
<div class="a" style="left:771px;top:179px;width:1px;height:758px;background:#4285f4"></div>
<div class="a" style="left:0;top:937px;width:1838px;height:13px;background:#f8f9fa;border-top:1px solid #e1e3e1;box-sizing:border-box"></div>
<div class="a" style="left:596px;top:938px;width:1242px;height:12px;background:#fff"></div>
<div class="a" style="left:592px;top:937px;width:4px;height:13px;background:#d5d8dc"></div>
<div class="a" style="left:861px;top:939px;width:927px;height:9px;border-radius:5px;background:#dadce0"></div>
<div class="a" style="left:0;top:950px;width:1838px;height:28px;background:#f9fbfd;border-top:1px solid #e1e3e1;box-sizing:border-box"></div>
<div class="a" style="left:1825px;top:938px;width:13px;height:12px;background:#fff;border-left:1px solid #e1e3e1"></div><div class="a" style="left:1829px;top:941px;width:0;height:0;border-top:3px solid transparent;border-bottom:3px solid transparent;border-right:4px solid #9aa0a6"></div>
<div class="a" style="left:47.500px;top:966.8px;width:10.500px;height:1.800px;background:#444746"></div><div class="a" style="left:51.800px;top:962.500px;width:1.800px;height:10.500px;background:#444746"></div>
<div class="a" style="left:84.500px;top:963.5px;width:14px;height:1.500px;background:#444746"></div>
<div class="a" style="left:84.500px;top:967.3px;width:14px;height:1.500px;background:#444746"></div>
<div class="a" style="left:84.500px;top:971.1px;width:14px;height:1.500px;background:#444746"></div>
<div class="a" style="left:121px;top:951px;width:386px;height:27px;background:#e1e9f7"></div>
<svg style="left:135px;top:960.5px" width="12" height="15.3" viewBox="0 0 11 14"><path d="M2.700 6V3.800a2.800 2.800 0 0 1 5.600 0V6" fill="none" stroke="#0b57d0" stroke-width="1.500"/><rect x=".5" y="5.500" width="10" height="8.500" rx="1.300" fill="#0b57d0"/><circle cx="5.500" cy="9.800" r="1.100" fill="#fff"/></svg>
<div class="t" style="left:153px;top:959.0px;font-size:14px;line-height:18.2px;color:#0b57d0;font-weight:bold;">Заказ 1 от 01.01.24 (сделай копию этого листа)</div>
<div class="dd" style="left:487px;top:966px;border-top-color:#0b57d0"></div>
<svg style="left:521.5px;top:960.5px" width="12" height="15.3" viewBox="0 0 11 14"><path d="M2.700 6V3.800a2.800 2.800 0 0 1 5.600 0V6" fill="none" stroke="#444746" stroke-width="1.500"/><rect x=".5" y="5.500" width="10" height="8.500" rx="1.300" fill="#444746"/><circle cx="5.500" cy="9.800" r="1.100" fill="#fff"/></svg>
<div class="t" style="left:539px;top:959.3px;font-size:13.8px;line-height:17.9px;color:#444746;font-weight:normal;-webkit-text-stroke:.3px #444746">ТАБЛИЦА В БЕЛУЮ ОТ 500 КГ АРТИКУЛ</div>
<div class="dd" style="left:816px;top:966px"></div>
<svg style="left:850px;top:960.5px" width="12" height="15.3" viewBox="0 0 11 14"><path d="M2.700 6V3.800a2.800 2.800 0 0 1 5.600 0V6" fill="none" stroke="#444746" stroke-width="1.500"/><rect x=".5" y="5.500" width="10" height="8.500" rx="1.300" fill="#444746"/><circle cx="5.500" cy="9.800" r="1.100" fill="#fff"/></svg>
<div class="t" style="left:866.5px;top:959.4px;font-size:13.6px;line-height:17.7px;color:#444746;font-weight:normal;-webkit-text-stroke:.3px #444746">Таблица контроля факт ст.доставки (не обязательно)</div>
<div class="dd" style="left:1238px;top:966px"></div>
<div class="a" style="left:1684px;top:954px;width:170px;height:30px;border-radius:8px;background:#c4eed0"></div>
<div class="t" style="left:1694px;top:959.3px;font-size:12.8px;line-height:16.6px;color:#0d3c26;font-weight:normal;-webkit-text-stroke:.25px #0d3c26">Сумма: 19 797 766 ...</div>
<div class="dd" style="left:1832px;top:965px;border-top-color:#072711"></div>
<div class="a" style="left:786px;top:466px;width:304px;height:48.5px;border-radius:9px;background:#fff;box-shadow:0 1px 3px rgba(60,64,67,.3),0 4px 8px 3px rgba(60,64,67,.15);z-index:6"></div>
<div class="a" style="left:0;top:0;z-index:7">
<svg style="left:802px;top:481.500px" width="17" height="17" viewBox="0 0 24 24"><circle cx="12" cy="12" r="11" fill="#444746"/><path d="M4.500 8.500l3.500 1 2.500 3-1 3 1.500 3v3M13.500 3l1 3-2.500 2 1.500 2.500 4-.5 2.500 3-2 4.500" fill="none" stroke="#fff" stroke-width="2.400" stroke-linejoin="round"/></svg>
<div class="t" style="left:831px;top:480.6px;font-size:13.9px;line-height:18.1px;color:#0b57d0;font-weight:normal;">https:<span>//</span>ir.ozone.ru/s3/...</div>
<svg style="left:990px;top:482px" width="15" height="17" viewBox="0 0 15 17" fill="none" stroke="#444746" stroke-width="1.500"><rect x="4.500" y="1" width="9.500" height="11.500" rx="1"/><path d="M1 4.500v10.500a1 1 0 0 0 1 1h8.500"/></svg>
<svg style="left:1023px;top:481px" width="18" height="18" viewBox="0 0 24 24" fill="none" stroke="#444746" stroke-width="2" stroke-linejoin="round"><path d="M4 20l1-4.500L16.500 4l3.500 3.500L8.500 19z"/><path d="M14 6.500l3.500 3.500"/></svg>
<svg style="left:1055px;top:481px" width="19" height="19" viewBox="0 0 24 24" fill="none" stroke="#444746" stroke-width="2"><path d="M10 7H7a5 5 0 0 0-1.500 9.800M14 7h3a5 5 0 0 1 3.500 8.500M9 12h4M3.500 3.500l17 17"/></svg>
</div>
</div><div class="a" style="left:735px;top:178px;width:1106px;height:756px;box-sizing:border-box;border:5px solid #e5382f;border-radius:6.5px;z-index:5"></div></body></html>
